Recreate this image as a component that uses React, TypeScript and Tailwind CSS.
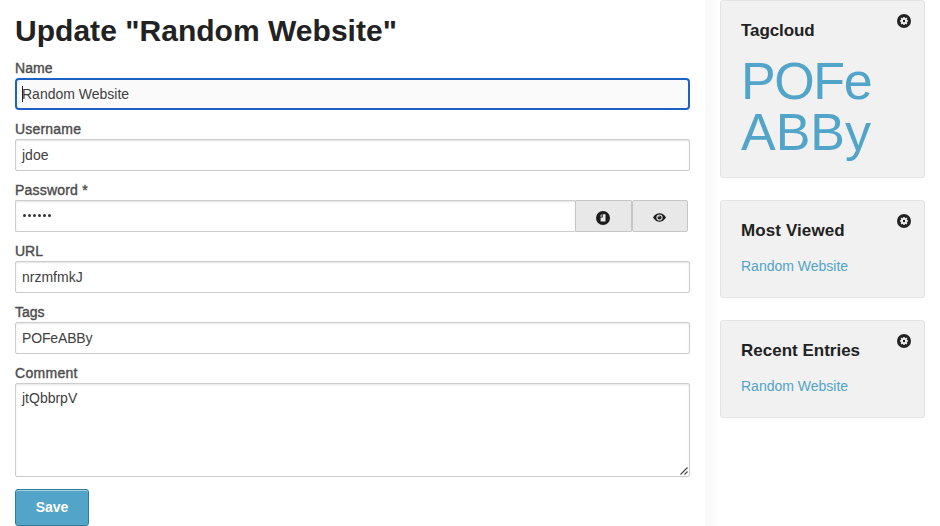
import React from "react";

const labelClass =
  "block h-[18px] text-[14px] leading-[16px] text-[#4d4d4d] [-webkit-text-stroke:0.4px_#4d4d4d]";
const boxClass =
  "h-8 w-full rounded-[2px] border border-[#ccc] bg-white px-[6px] text-[14px] leading-[30px] text-[#404040] shadow-[inset_0_1px_2px_rgba(0,0,0,0.1)]";

function Field({
  label,
  labelSpacing,
  children,
}: {
  label: string;
  labelSpacing: string;
  children: React.ReactNode;
}) {
  return (
    <div className="mb-[11px]">
      <label className={labelClass}>
        <span className={labelSpacing}>{label}</span>
      </label>
      {children}
    </div>
  );
}

function GearIcon() {
  return (
    <svg className="absolute top-[13px] right-[13px] size-[14px]" viewBox="0 0 14 14">
      <circle cx="7" cy="7" r="7" fill="#222" />
      <g stroke="#f2f2f2" strokeWidth="1.5">
        <path d="M7 2.9v8.2M2.9 7h8.2M4.1 4.1l5.8 5.8M9.9 4.1l-5.8 5.8" />
      </g>
      <circle cx="7" cy="7" r="2.9" fill="#f2f2f2" />
      <circle cx="7" cy="7" r="1.2" fill="#222" />
    </svg>
  );
}

function Card({
  title,
  titleSpacing,
  className,
  children,
}: {
  title: string;
  titleSpacing: string;
  className: string;
  children: React.ReactNode;
}) {
  return (
    <section
      className={`relative w-[205px] rounded-[3px] border border-[#e3e3e3] bg-[#f1f1f1] px-5 ${className}`}
    >
      <GearIcon />
      <h2
        className={`pt-[18px] text-[17px] leading-6 font-bold text-[#222] ${titleSpacing}`}
      >
        {title}
      </h2>
      {children}
    </section>
  );
}

export default function App() {
  return (
    <div className="flex h-[526px] w-[940px] overflow-hidden bg-white font-['Liberation_Sans',Arial,sans-serif]">
      <main className="w-[705px] px-[15px]">
        <h1 className="mb-[7px] pt-[9px] text-[30px] leading-[44px] font-bold tracking-[0.03px] whitespace-nowrap text-[#222]">
          Update "Random Website"
        </h1>
        <Field label="Name" labelSpacing="tracking-[0.1px]">
          <div className="flex h-8 w-[675px] items-center rounded-[4px] border-2 border-[#1f60c4] bg-[#fafafa] px-[5px] text-[14px] text-[#404040]">
            <span className="relative">
              <i className="absolute top-[2px] left-0 h-4 w-px bg-[#222]" />
              Random Website
            </span>
          </div>
        </Field>
        <Field label="Username" labelSpacing="tracking-[0.2px]">
          <div className={boxClass}>jdoe</div>
        </Field>
        <Field label="Password *" labelSpacing="tracking-[0.2px]">
          <div className="flex w-[673px]">
            <div className="flex h-8 w-[560px] items-center gap-[2px] rounded-l-[2px] border border-r-0 border-[#ccc] pb-px pl-[6.5px] shadow-[inset_0_1px_2px_rgba(0,0,0,0.1)]">
              {[0, 1, 2, 3, 4, 5].map((dot) => (
                <i key={dot} className="size-[3px] rounded-full bg-[#333]" />
              ))}
            </div>
            <button className="flex h-8 w-[57px] items-center justify-center rounded-[1px] border border-[#c6c6c6] bg-[#e8e8e8] pt-[3px] pr-px">
              <svg className="size-[14px]" viewBox="0 0 14 14">
                <circle cx="7" cy="7" r="7" fill="#1c1c1c" />
                <path d="M6.8 3.3h2.7v7.2H4.6V6.6h2.2z" fill="#e8e8e8" />
                <path d="M4.3 5.7V4.6l1.3-1.3h.5v2.4z" fill="#a8a8a8" />
              </svg>
            </button>
            <button className="flex h-8 w-14 items-center justify-center rounded-[2px] border border-[#c6c6c6] bg-[#e8e8e8] pt-[3px] pr-px">
              <svg className="h-[9px] w-[13px]" viewBox="0 0 13 9">
                <path d="M0 4.5Q2.7.3 6.5.3T13 4.5Q10.3 8.7 6.5 8.7T0 4.5z" fill="#1c1c1c" />
                <circle cx="6.5" cy="4.5" r="3.1" fill="#e8e8e8" />
                <circle cx="6.5" cy="4.5" r="2" fill="#1c1c1c" />
                <circle cx="6" cy="3.7" r=".6" fill="#e8e8e8" />
              </svg>
            </button>
          </div>
        </Field>
        <Field label="URL" labelSpacing="">
          <div className={boxClass}>nrzmfmkJ</div>
        </Field>
        <Field label="Tags" labelSpacing="">
          <div className={`${boxClass} tracking-[-0.15px]`}>POFeABBy</div>
        </Field>
        <label className={`${labelClass} tracking-[0.3px]`}>Comment</label>
        <div className="relative h-[94px] w-full rounded-[2px] border border-[#ccc] px-[6px] pt-[5px] text-[14px] leading-[19px] text-[#404040] shadow-[inset_0_1px_2px_rgba(0,0,0,0.1)]">
          jtQbbrpV
          <svg className="absolute right-[1px] bottom-[1px] size-2" viewBox="0 0 8 8">
            <path d="M.5 7.5l7-7M4.5 7.5l3-3" stroke="#444" strokeWidth="1.2" />
          </svg>
        </div>
        <button className="mt-3 block h-[37px] w-[74px] rounded-[3px] border border-[#347a94] bg-[#52a5c8] text-[14px] font-bold text-white shadow-[inset_0_1px_0_rgba(255,255,255,0.5)]">
          Save
        </button>
      </main>
      <div className="w-[15px] bg-linear-to-r from-[#f8f8f8] to-white" />
      <aside>
        <Card title="Tagcloud" titleSpacing="tracking-[-0.1px]" className="h-[178px]">
          <p className="mt-[13px] text-[52px] leading-[51px] text-[#52a5c8]">
            <span className="tracking-[-1.4px]">POFe</span>
            <br />
            ABBy
          </p>
        </Card>
        <Card title="Most Viewed" titleSpacing="tracking-[0.1px]" className="mt-[22px] h-[98px]">
          <p className="mt-[13px] text-[14px] leading-5 text-[#52a5c8]">Random Website</p>
        </Card>
        <Card title="Recent Entries" titleSpacing="" className="mt-[22px] h-[98px]">
          <p className="mt-[13px] text-[14px] leading-5 text-[#52a5c8]">Random Website</p>
        </Card>
      </aside>
    </div>
  );
}
